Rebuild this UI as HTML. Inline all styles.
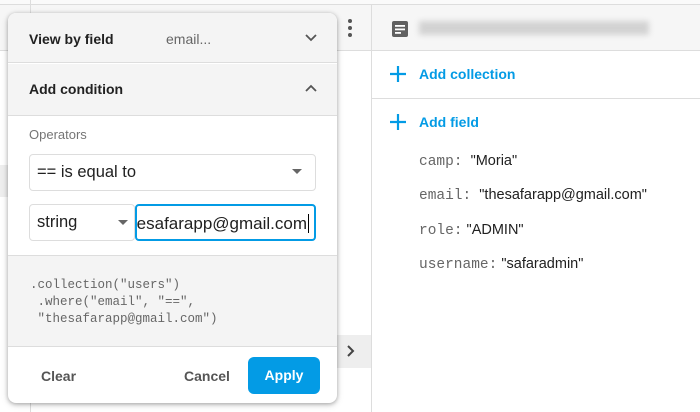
<!DOCTYPE html>
<html><head><style>
*{box-sizing:border-box;margin:0;padding:0}
body{width:700px;height:412px;overflow:hidden;background:#fff;font-family:"Liberation Sans",Roboto,sans-serif;position:relative;color:#212121}
.a{position:absolute}
.mono{font-family:"Liberation Mono",monospace}
</style></head><body>
<div class="a" style="left:0;top:0;width:700px;height:4px;background:#fafafa"></div>
<div class="a" style="left:0;top:4px;width:700px;height:47px;background:#f6f6f6;border-top:1px solid #ddd;border-bottom:1px solid #ddd"></div>
<div class="a" style="left:30px;top:0;width:1px;height:412px;background:#ddd"></div>
<div class="a" style="left:371px;top:4px;width:1px;height:408px;background:#ddd"></div>
<div class="a" style="left:372px;top:51px;width:328px;height:361px;background:#fff"></div>
<div class="a" style="left:31px;top:51px;width:340px;height:361px;background:#fff"></div>
<div class="a" style="left:0;top:165px;width:8px;height:32px;background:#eee"></div>
<div class="a" style="left:337px;top:335px;width:34px;height:33px;background:#eee"></div>
<svg class="a" style="left:343px;top:343px" width="16" height="16"><path d="M5 3l5 5-5 5" fill="none" stroke="#444" stroke-width="2"/></svg>
<svg class="a" style="left:346px;top:18px" width="8" height="20"><circle cx="4" cy="3" r="2" fill="#555"/><circle cx="4" cy="10" r="2" fill="#555"/><circle cx="4" cy="17" r="2" fill="#555"/></svg>
<svg class="a" style="left:391px;top:20px" width="18" height="18"><rect x="1" y="1" width="16" height="16" rx="2" fill="#616161"/><rect x="4" y="5" width="10" height="1.8" fill="#fff"/><rect x="4" y="8.5" width="10" height="1.8" fill="#fff"/><rect x="4" y="12" width="6" height="1.8" fill="#fff"/></svg>
<div class="a" style="left:419px;top:21px;width:230px;height:14px;background:#bbb;filter:blur(3px);opacity:.6"></div>
<div class="a" style="left:372px;top:98px;width:328px;height:1px;background:#ddd"></div>
<svg class="a" style="left:389px;top:65px" width="18" height="18"><path d="M9 1v16M1 9h16" stroke="#039be5" stroke-width="2.2"/></svg>
<div class="a" style="left:419px;top:66px;font-size:14px;font-weight:bold;color:#039be5">Add collection</div>
<svg class="a" style="left:389px;top:113px" width="18" height="18"><path d="M9 1v16M1 9h16" stroke="#039be5" stroke-width="2.2"/></svg>
<div class="a" style="left:419px;top:114px;font-size:14px;font-weight:bold;color:#039be5">Add field</div>
<div class="a" style="left:419px;top:153px;font-size:14.5px;line-height:17px"><span class="mono" style="color:#666">camp:</span>&nbsp; "Moria"</div>
<div class="a" style="left:419px;top:187px;font-size:14.5px;line-height:17px"><span class="mono" style="color:#666">email:</span>&nbsp; "thesafarapp@gmail.com"</div>
<div class="a" style="left:419px;top:222px;font-size:14.5px;line-height:17px"><span class="mono" style="color:#666">role:</span> "ADMIN"</div>
<div class="a" style="left:419px;top:256px;font-size:14.5px;line-height:17px"><span class="mono" style="color:#666">username:</span> "safaradmin"</div>

<div class="a" style="left:8px;top:13px;width:329px;height:390px;background:#fff;border-radius:8px;box-shadow:0 1px 4px rgba(0,0,0,.3),0 2px 8px rgba(0,0,0,.12);overflow:hidden">
 <div class="a" style="left:0;top:0;width:329px;height:50px;background:#f4f4f4;border-bottom:1px solid #ddd"></div>
 <div class="a" style="left:21px;top:18px;font-size:14px;font-weight:bold">View by field</div>
 <div class="a" style="left:158px;top:18px;font-size:14px;color:#666">email...</div>
 <svg class="a" style="left:296px;top:19px" width="14" height="12"><path d="M2 3l5 5 5-5" fill="none" stroke="#555" stroke-width="1.8"/></svg>
 <div class="a" style="left:0;top:51px;width:329px;height:52px;background:#f4f4f4;border-bottom:1px solid #ddd"></div>
 <div class="a" style="left:21px;top:68px;font-size:14px;font-weight:bold">Add condition</div>
 <svg class="a" style="left:296px;top:69px" width="14" height="12"><path d="M2 9l5-5 5 5" fill="none" stroke="#555" stroke-width="1.8"/></svg>
 <div class="a" style="left:21px;top:114px;font-size:13px;color:#757575">Operators</div>
 <div class="a" style="left:21px;top:141px;width:287px;height:37px;border:1px solid #ddd;border-radius:4px"></div>
 <div class="a" style="left:29px;top:150px;font-size:16.5px">== is equal to</div>
 <svg class="a" style="left:283px;top:155px" width="12" height="8"><path d="M1 1h10L6 6z" fill="#666"/></svg>
 <div class="a" style="left:21px;top:191px;width:106px;height:37px;border:1px solid #ddd;border-radius:4px"></div>
 <div class="a" style="left:29px;top:200px;font-size:16.5px">string</div>
 <svg class="a" style="left:109px;top:206px" width="12" height="8"><path d="M1 1h10L6 6z" fill="#666"/></svg>
 <div class="a" style="left:127px;top:191px;width:181px;height:37px;border:2px solid #039be5;border-radius:4px;overflow:hidden"><div style="position:absolute;right:5px;top:8px;font-size:17px;white-space:nowrap">thesafarapp@gmail.com<span style="border-left:1px solid #000;margin-left:1px"></span></div></div>
 <div class="a" style="left:0;top:242px;width:329px;height:92px;background:#f4f4f4;border-top:1px solid #ddd;border-bottom:1px solid #ddd"></div>
 <div class="a mono" style="left:22px;top:264px;font-size:12.5px;line-height:17px;color:#666;white-space:pre">.collection("users")
 .where("email", "==",
 "thesafarapp@gmail.com")</div>
 <div class="a" style="left:33px;top:355px;font-size:14px;font-weight:bold;color:#555">Clear</div>
 <div class="a" style="left:176px;top:355px;font-size:14px;font-weight:bold;color:#555">Cancel</div>
 <div class="a" style="left:240px;top:344px;width:72px;height:37px;background:#039be5;border-radius:6px;color:#fff;font-size:14px;font-weight:bold;text-align:center;line-height:37px">Apply</div>
</div>
</body></html>
